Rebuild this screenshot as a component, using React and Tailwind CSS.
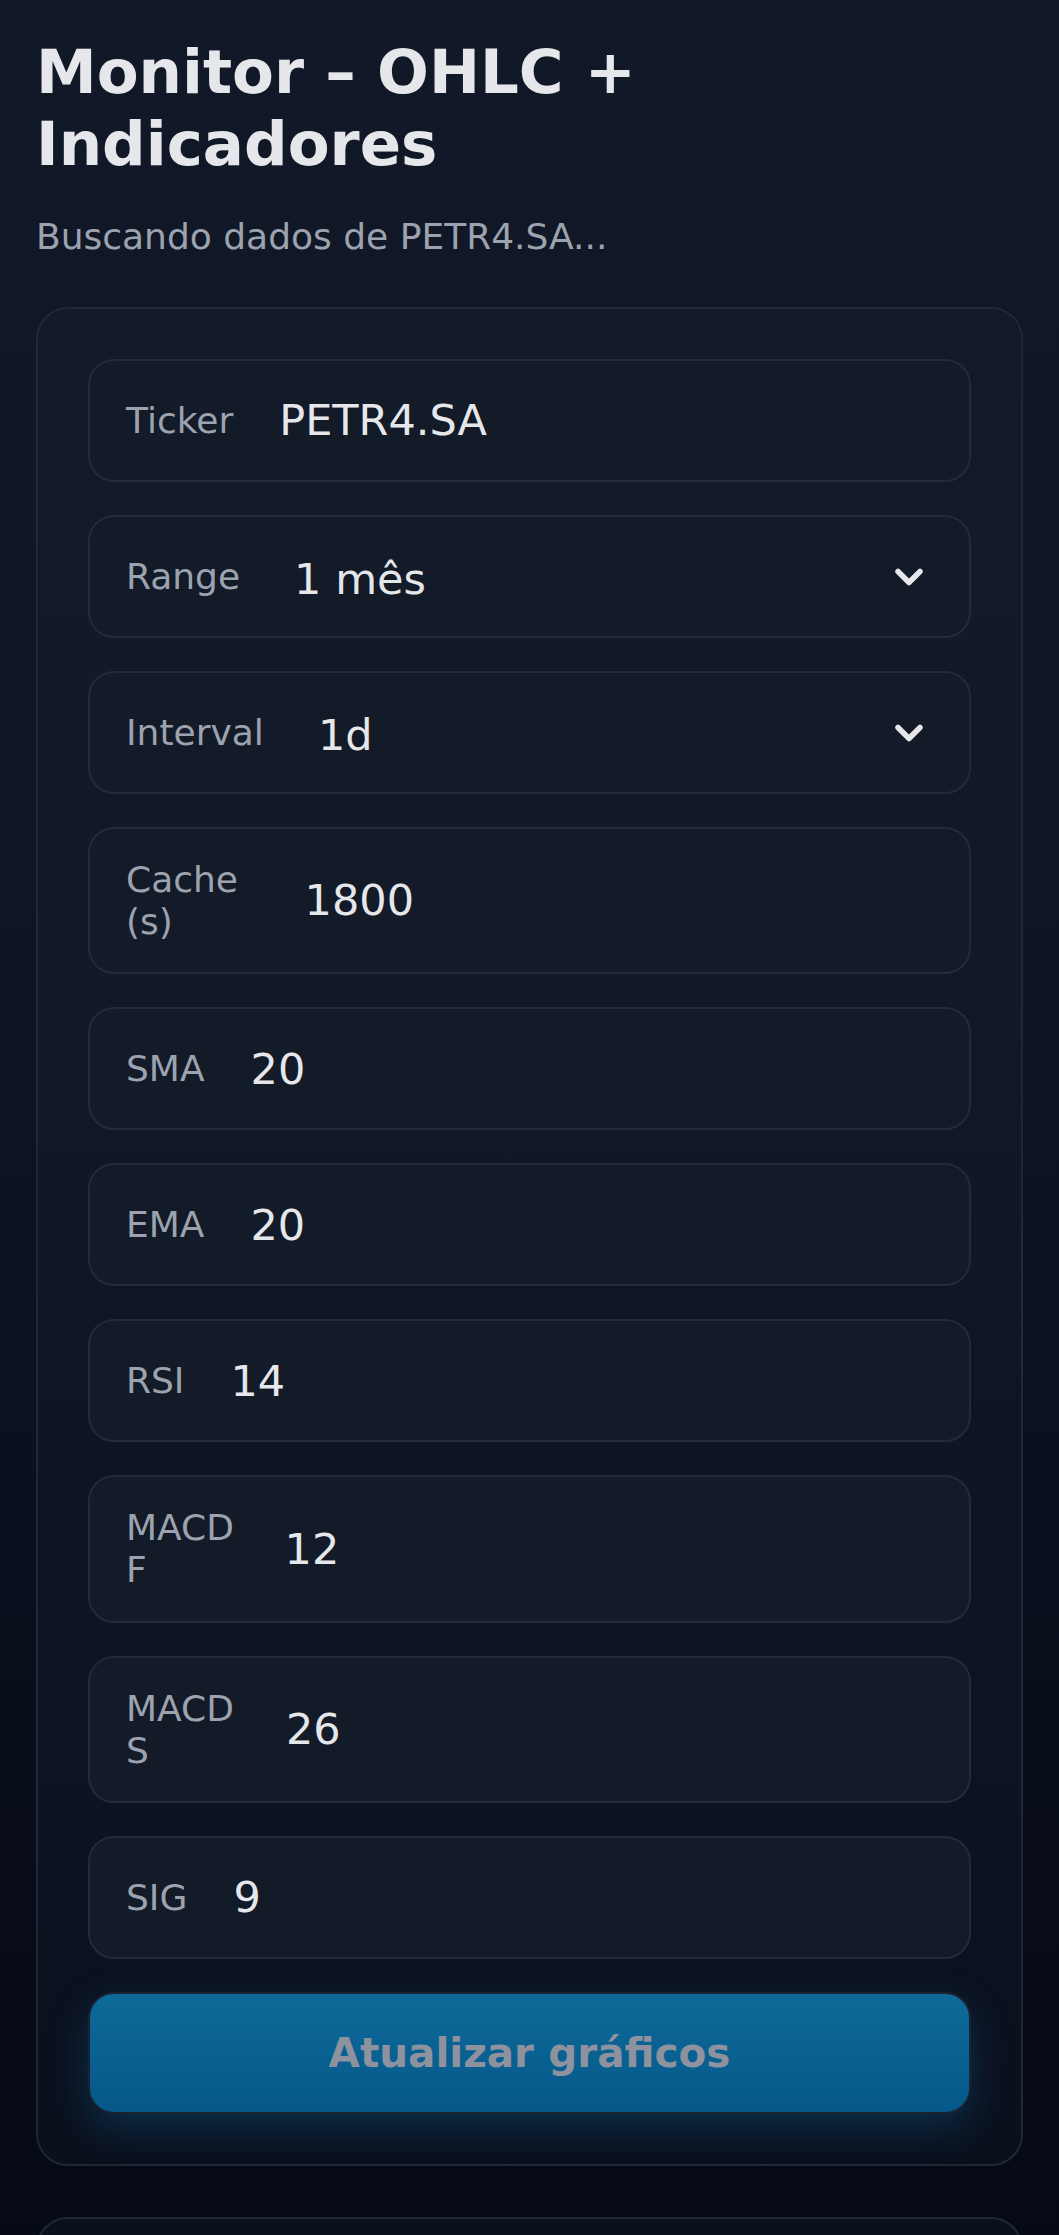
import React, { useState } from 'react';
import { ChevronDown } from 'lucide-react';

const RANGE_OPTIONS = [
  ['5d', '5 dias'],
  ['1mo', '1 mês'],
  ['3mo', '3 meses'],
  ['6mo', '6 meses'],
  ['1y', '1 ano'],
];

const INTERVAL_OPTIONS = [
  ['1d', '1d'],
  ['1wk', '1wk'],
  ['1mo', '1mo'],
];

const NUMBER_FIELDS = [
  { key: 'cache', label: 'Cache (s)' },
  { key: 'sma', label: 'SMA' },
  { key: 'ema', label: 'EMA' },
  { key: 'rsi', label: 'RSI' },
  { key: 'macdF', label: 'MACD F' },
  { key: 'macdS', label: 'MACD S' },
  { key: 'sig', label: 'SIG' },
];

const Field = ({ label, children }) => (
  <label className="relative flex items-center gap-[46px] rounded-[26px] border-2 border-[#222b3a] bg-[#131a28] px-[36px] py-[30px]">
    <span className="text-[36px] leading-[41.7px] text-[#9ca3af]">{label}</span>
    {children}
  </label>
);

const inputClass = 'h-[59px] w-full bg-transparent text-[43px] text-[#e5e7eb] outline-none';

const SelectField = ({ label, value, options, onChange }) => (
  <Field label={label}>
    <select
      value={value}
      onChange={e => onChange(e.target.value)}
      className={`${inputClass} appearance-none pl-[8px] pr-[60px]`}
    >
      {options.map(([v, text]) => (
        <option key={v} value={v} className="bg-[#131a28]">{text}</option>
      ))}
    </select>
    <ChevronDown
      size={44}
      strokeWidth={3}
      className="pointer-events-none absolute right-[38px] top-1/2 -translate-y-1/2 text-[#e5e7eb]"
    />
  </Field>
);

export default function App() {
  const [form, setForm] = useState({
    ticker: 'PETR4.SA',
    range: '1mo',
    interval: '1d',
    cache: '1800',
    sma: '20',
    ema: '20',
    rsi: '14',
    macdF: '12',
    macdS: '26',
    sig: '9',
  });

  const set = key => value => setForm(prev => ({ ...prev, [key]: value }));

  return (
    <div className="min-h-screen bg-[linear-gradient(180deg,#111827_0px,#0f1523_900px,#0a0f1d_1600px,#060a14_2235px)] px-[36px] pb-[36px] pt-[36px] font-['DejaVu_Sans','Liberation_Sans',sans-serif]">
      <h1 className="text-[61px] font-bold leading-[71.5px] text-[#e5e7eb]">Monitor – OHLC + Indicadores</h1>
      <p className="mt-[31px] text-[36px] leading-[54px] text-[#9ca3af]">Buscando dados de PETR4.SA...</p>

      <section className="mt-[43px] rounded-[32px] border-2 border-[#1f2837] bg-[#1e293b]/20 p-[50px]">
        <form className="flex flex-col gap-[33px]" onSubmit={e => e.preventDefault()}>
          <Field label="Ticker">
            <input
              type="text"
              value={form.ticker}
              onChange={e => set('ticker')(e.target.value)}
              className={inputClass}
            />
          </Field>
          <SelectField label="Range" value={form.range} options={RANGE_OPTIONS} onChange={set('range')} />
          <SelectField label="Interval" value={form.interval} options={INTERVAL_OPTIONS} onChange={set('interval')} />

          {NUMBER_FIELDS.map(f => (
            <Field key={f.key} label={f.label}>
              <input
                type="number"
                value={form[f.key]}
                onChange={e => set(f.key)(e.target.value)}
                className={`${inputClass} appearance-none [&::-webkit-inner-spin-button]:appearance-none`}
              />
            </Field>
          ))}

          <button
            type="submit"
            disabled
            className="h-[122px] w-full rounded-[26px] border-2 border-[#1b2232] bg-gradient-to-b from-[#0e6a99] to-[#05588a] text-[40.5px] font-bold text-[#8e929e] shadow-[0_14px_40px_rgba(14,116,180,0.3)]"
          >
            Atualizar gráficos
          </button>
        </form>
      </section>

      <section className="mt-[51px] h-[300px] rounded-[32px] border-2 border-[#1f2837] bg-[#1e293b]/20"></section>
    </div>
  );
}
